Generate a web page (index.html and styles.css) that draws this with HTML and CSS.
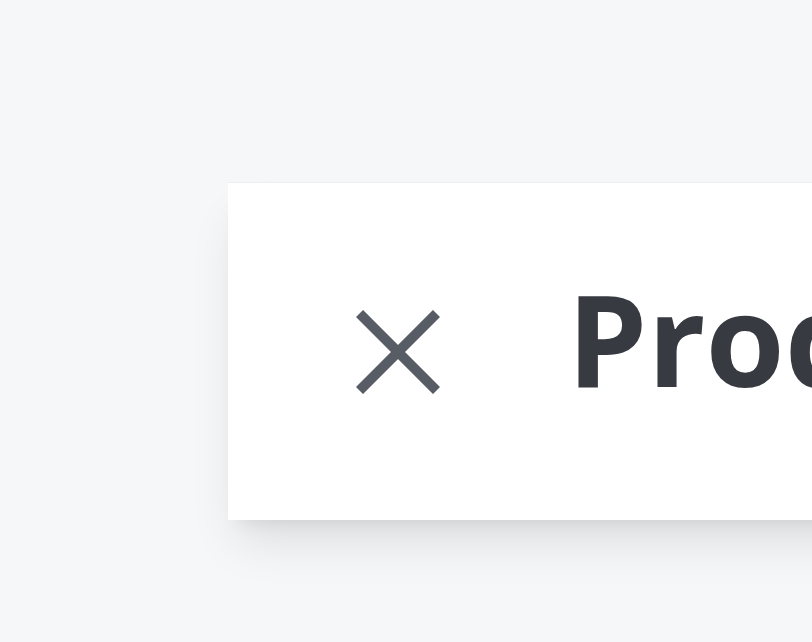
FILE: index.html
```html
<!DOCTYPE html>
<html lang="en">

<head>
    <meta charset="UTF-8">
    <meta name="viewport" content="width=device-width, initial-scale=1.0">
    <title>Product details</title>
    <link rel="stylesheet" href="styles.css">
</head>

<body>
    <div class="dialog">
        <header class="dialog-header">
            <button type="button" class="close-btn" aria-label="Close">
                <svg width="84" height="84" viewBox="0 0 84 84" fill="none">
                    <path d="M3.5 3.5L80.5 80.5M80.5 3.5L3.5 80.5" stroke="#585c65" stroke-width="10" />
                </svg>
            </button>
            <h1 class="dialog-title">Product details</h1>
        </header>
    </div>
</body>

</html>
```
FILE: styles.css
```css
html,
body {
    margin: 0;
    padding: 0;
    height: 100%;
    overflow: hidden;
}

body {
    background-color: #f6f7f9;
    font-family: 'Open Sans', 'Liberation Sans', sans-serif;
    padding: 182px 0 0 228px;
    box-sizing: border-box;
}

.dialog {
    width: 1400px;
    height: 338px;
    background-color: #ffffff;
    border-top: 1px solid #eceef1;
    box-sizing: border-box;
    box-shadow: 0 30px 45px -9px rgba(0, 0, 0, 0.1), 0 12px 18px -12px rgba(0, 0, 0, 0.1);
}

.dialog-header {
    height: 100%;
    display: flex;
    align-items: center;
    padding-left: 128px;
}

.close-btn {
    display: flex;
    padding: 0;
    border: none;
    background: none;
    cursor: pointer;
}

.dialog-title {
    margin: 0 0 28px 127px;
    font-size: 128px;
    line-height: 1;
    font-weight: 700;
    color: #373a41;
    white-space: nowrap;
}
```
